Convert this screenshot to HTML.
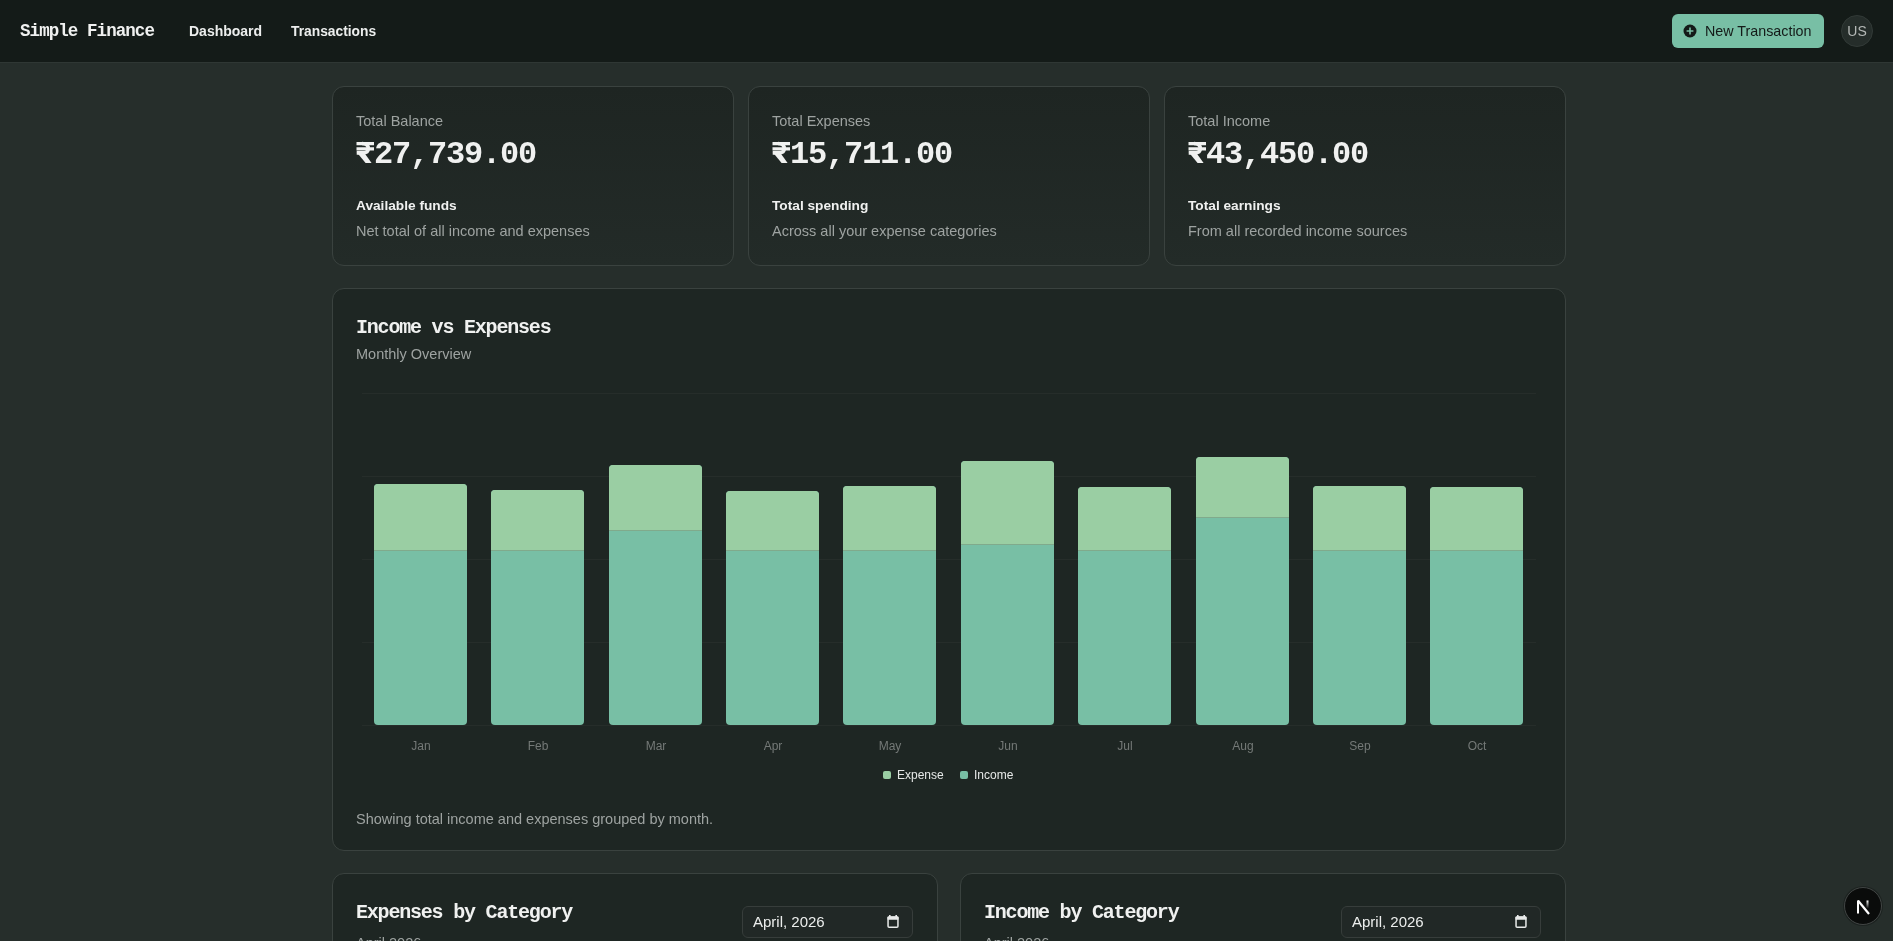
<!DOCTYPE html>
<html>
<head>
<meta charset="utf-8">
<style>
*{box-sizing:border-box;margin:0;padding:0}
html,body{width:1893px;height:941px;overflow:hidden}
body{background:#262e2b;font-family:"Liberation Sans",sans-serif;color:#f0f1f0;position:relative}
.abs{position:absolute;white-space:nowrap;will-change:transform}
.mono{font-family:"Liberation Mono",monospace;font-weight:bold}
#nav{position:absolute;left:0;top:0;width:1893px;height:63px;background:#141b18;border-bottom:1px solid #2f3734}
.card{position:absolute;background:#1e2623;border:1px solid #3a423f;border-radius:12px}
.grad{background:linear-gradient(to top,#232b28,#1e2522)}
.t14{font-size:14.5px;line-height:20px}
.muted{color:#9ea3a1}
.bold{font-weight:bold}
</style>
</head>
<body>
<div id="nav">
<div class="abs mono" style="left:20px;top:19px;font-size:17.5px;line-height:24px;letter-spacing:-0.93px">Simple Finance</div>
<div class="abs bold" style="left:189px;top:21px;font-size:14px;line-height:20px;color:#eceeed">Dashboard</div>
<div class="abs bold" style="left:291px;top:22px;font-size:13.8px;line-height:20px;color:#eceeed">Transactions</div>
<div class="abs" style="left:1672px;top:14px;width:152px;height:34px;background:#78bfa5;border-radius:6px"></div>
<svg class="abs" style="left:1683px;top:24px" width="14" height="14" viewBox="0 0 14 14"><circle cx="7" cy="7" r="6.5" fill="#141a18"/><path d="M7 3.6V10.4M3.6 7H10.4" stroke="#78bfa5" stroke-width="1.6"/></svg>
<div class="abs" style="left:1705px;top:21px;font-size:14.3px;line-height:20px;color:#141a18">New Transaction</div>
<div class="abs" style="left:1841px;top:15px;width:32px;height:32px;border-radius:50%;background:#252d2a;border:1px solid #323a37"></div>
<div class="abs" style="left:1841px;top:21px;width:32px;text-align:center;font-size:14px;line-height:20px;color:#b4b8b6">US</div>
</div>
<div class="card grad" style="left:332px;top:86px;width:402px;height:180px"></div>
<div class="abs t14 muted" style="left:356px;top:111px">Total Balance</div>
<div class="abs" style="left:356px;top:141px;width:200px;height:24px"><div style="position:absolute;left:0;top:0;width:18px;height:22px"><svg width="18" height="22" viewBox="0 0 18 22" style="position:absolute;left:0;top:0"><path d="M0.5 2.55H18M0.5 7.95H18" stroke="#f0f1f0" stroke-width="3.2" fill="none"/><path d="M6 2.55C10.2 2.55 12.3 4.8 12.3 7.8C12.3 10.6 10.2 11.9 6.5 11.9H0.7" stroke="#f0f1f0" stroke-width="3.6" fill="none"/><path d="M0.7 11.2L7.9 11.2L15.6 21.9L9.6 21.9Z" fill="#f0f1f0"/></svg></div><div class="abs mono" style="left:18px;top:-2.5px;font-size:32px;line-height:32px;letter-spacing:-1.2px">27,739.00</div></div>
<div class="abs t14 bold" style="left:356px;top:196px;font-size:13.7px">Available funds</div>
<div class="abs t14 muted" style="left:356px;top:221px">Net total of all income and expenses</div>
<div class="card grad" style="left:748px;top:86px;width:402px;height:180px"></div>
<div class="abs t14 muted" style="left:772px;top:111px">Total Expenses</div>
<div class="abs" style="left:772px;top:141px;width:200px;height:24px"><div style="position:absolute;left:0;top:0;width:18px;height:22px"><svg width="18" height="22" viewBox="0 0 18 22" style="position:absolute;left:0;top:0"><path d="M0.5 2.55H18M0.5 7.95H18" stroke="#f0f1f0" stroke-width="3.2" fill="none"/><path d="M6 2.55C10.2 2.55 12.3 4.8 12.3 7.8C12.3 10.6 10.2 11.9 6.5 11.9H0.7" stroke="#f0f1f0" stroke-width="3.6" fill="none"/><path d="M0.7 11.2L7.9 11.2L15.6 21.9L9.6 21.9Z" fill="#f0f1f0"/></svg></div><div class="abs mono" style="left:18px;top:-2.5px;font-size:32px;line-height:32px;letter-spacing:-1.2px">15,711.00</div></div>
<div class="abs t14 bold" style="left:772px;top:196px;font-size:13.7px">Total spending</div>
<div class="abs t14 muted" style="left:772px;top:221px">Across all your expense categories</div>
<div class="card grad" style="left:1164px;top:86px;width:402px;height:180px"></div>
<div class="abs t14 muted" style="left:1188px;top:111px">Total Income</div>
<div class="abs" style="left:1188px;top:141px;width:200px;height:24px"><div style="position:absolute;left:0;top:0;width:18px;height:22px"><svg width="18" height="22" viewBox="0 0 18 22" style="position:absolute;left:0;top:0"><path d="M0.5 2.55H18M0.5 7.95H18" stroke="#f0f1f0" stroke-width="3.2" fill="none"/><path d="M6 2.55C10.2 2.55 12.3 4.8 12.3 7.8C12.3 10.6 10.2 11.9 6.5 11.9H0.7" stroke="#f0f1f0" stroke-width="3.6" fill="none"/><path d="M0.7 11.2L7.9 11.2L15.6 21.9L9.6 21.9Z" fill="#f0f1f0"/></svg></div><div class="abs mono" style="left:18px;top:-2.5px;font-size:32px;line-height:32px;letter-spacing:-1.2px">43,450.00</div></div>
<div class="abs t14 bold" style="left:1188px;top:196px;font-size:13.7px">Total earnings</div>
<div class="abs t14 muted" style="left:1188px;top:221px">From all recorded income sources</div>
<div class="card" style="left:332px;top:288px;width:1234px;height:563px"></div>
<div class="abs mono" style="left:356px;top:316px;font-size:20px;line-height:24px;letter-spacing:-1.2px">Income vs Expenses</div>
<div class="abs t14 muted" style="left:356px;top:344px">Monthly Overview</div>
<div class="abs" style="left:362px;top:393px;width:1174px;height:1px;background:#262d2a"></div>
<div class="abs" style="left:362px;top:476px;width:1174px;height:1px;background:#262d2a"></div>
<div class="abs" style="left:362px;top:559px;width:1174px;height:1px;background:#262d2a"></div>
<div class="abs" style="left:362px;top:642px;width:1174px;height:1px;background:#262d2a"></div>
<div class="abs" style="left:362px;top:725px;width:1174px;height:1px;background:#262d2a"></div>
<div class="abs" style="left:374.00px;top:484px;width:93px;height:241.00px;border-radius:4px;overflow:hidden;background:#78bfa5"><div style="height:66.30px;background:#9acea3"></div><div style="position:absolute;left:0;top:66.00px;width:93px;height:1px;background:#80aa8c"></div></div>
<div class="abs" style="left:380.70px;top:738px;width:80px;text-align:center;font-size:12px;line-height:16px;color:#747977">Jan</div>
<div class="abs" style="left:491.00px;top:489.6px;width:93px;height:235.40px;border-radius:4px;overflow:hidden;background:#78bfa5"><div style="height:60.70px;background:#9acea3"></div><div style="position:absolute;left:0;top:60.40px;width:93px;height:1px;background:#80aa8c"></div></div>
<div class="abs" style="left:498.10px;top:738px;width:80px;text-align:center;font-size:12px;line-height:16px;color:#747977">Feb</div>
<div class="abs" style="left:609.00px;top:465px;width:93px;height:260.00px;border-radius:4px;overflow:hidden;background:#78bfa5"><div style="height:65.00px;background:#9acea3"></div><div style="position:absolute;left:0;top:65.00px;width:93px;height:1px;background:#80aa8c"></div></div>
<div class="abs" style="left:615.50px;top:738px;width:80px;text-align:center;font-size:12px;line-height:16px;color:#747977">Mar</div>
<div class="abs" style="left:726.00px;top:491.2px;width:93px;height:233.80px;border-radius:4px;overflow:hidden;background:#78bfa5"><div style="height:59.00px;background:#9acea3"></div><div style="position:absolute;left:0;top:58.80px;width:93px;height:1px;background:#80aa8c"></div></div>
<div class="abs" style="left:732.90px;top:738px;width:80px;text-align:center;font-size:12px;line-height:16px;color:#747977">Apr</div>
<div class="abs" style="left:843.00px;top:486.2px;width:93px;height:238.80px;border-radius:4px;overflow:hidden;background:#78bfa5"><div style="height:64.10px;background:#9acea3"></div><div style="position:absolute;left:0;top:63.80px;width:93px;height:1px;background:#80aa8c"></div></div>
<div class="abs" style="left:850.30px;top:738px;width:80px;text-align:center;font-size:12px;line-height:16px;color:#747977">May</div>
<div class="abs" style="left:961.00px;top:461.3px;width:93px;height:263.70px;border-radius:4px;overflow:hidden;background:#78bfa5"><div style="height:83.00px;background:#9acea3"></div><div style="position:absolute;left:0;top:82.70px;width:93px;height:1px;background:#80aa8c"></div></div>
<div class="abs" style="left:967.70px;top:738px;width:80px;text-align:center;font-size:12px;line-height:16px;color:#747977">Jun</div>
<div class="abs" style="left:1078.00px;top:486.9px;width:93px;height:238.10px;border-radius:4px;overflow:hidden;background:#78bfa5"><div style="height:63.40px;background:#9acea3"></div><div style="position:absolute;left:0;top:63.10px;width:93px;height:1px;background:#80aa8c"></div></div>
<div class="abs" style="left:1085.10px;top:738px;width:80px;text-align:center;font-size:12px;line-height:16px;color:#747977">Jul</div>
<div class="abs" style="left:1196.00px;top:457px;width:93px;height:268.00px;border-radius:4px;overflow:hidden;background:#78bfa5"><div style="height:60.40px;background:#9acea3"></div><div style="position:absolute;left:0;top:60.00px;width:93px;height:1px;background:#80aa8c"></div></div>
<div class="abs" style="left:1202.50px;top:738px;width:80px;text-align:center;font-size:12px;line-height:16px;color:#747977">Aug</div>
<div class="abs" style="left:1313.00px;top:486px;width:93px;height:239.00px;border-radius:4px;overflow:hidden;background:#78bfa5"><div style="height:64.30px;background:#9acea3"></div><div style="position:absolute;left:0;top:64.00px;width:93px;height:1px;background:#80aa8c"></div></div>
<div class="abs" style="left:1319.90px;top:738px;width:80px;text-align:center;font-size:12px;line-height:16px;color:#747977">Sep</div>
<div class="abs" style="left:1430.00px;top:487px;width:93px;height:238.00px;border-radius:4px;overflow:hidden;background:#78bfa5"><div style="height:63.30px;background:#9acea3"></div><div style="position:absolute;left:0;top:63.00px;width:93px;height:1px;background:#80aa8c"></div></div>
<div class="abs" style="left:1437.30px;top:738px;width:80px;text-align:center;font-size:12px;line-height:16px;color:#747977">Oct</div>
<div class="abs" style="left:883px;top:771px;width:8px;height:8px;border-radius:2px;background:#9acea3"></div>
<div class="abs" style="left:897px;top:767px;font-size:12px;line-height:16px;color:#e6e8e7">Expense</div>
<div class="abs" style="left:960px;top:771px;width:8px;height:8px;border-radius:2px;background:#78bfa5"></div>
<div class="abs" style="left:974px;top:767px;font-size:12px;line-height:16px;color:#e6e8e7">Income</div>
<div class="abs t14 muted" style="left:356px;top:809px">Showing total income and expenses grouped by month.</div>
<div class="card" style="left:332px;top:873px;width:606px;height:100px"></div>
<div class="abs mono" style="left:356px;top:901px;font-size:20px;line-height:24px;letter-spacing:-1.2px">Expenses by Category</div>
<div class="abs t14 muted" style="left:356px;top:933px">April 2026</div>
<div class="abs" style="left:742px;top:906px;width:171px;height:32px;border:1px solid #373d3b;border-radius:6px;background:#212826"></div>
<div class="abs" style="left:753px;top:912px;font-size:15px;line-height:20px;color:#eceeed">April, 2026</div>
<div class="abs" style="left:887px;top:915px;line-height:0"><svg width="12" height="13" viewBox="0 0 12 13"><rect x="2" y="0" width="1.6" height="2.5" fill="#e8eae9"/><rect x="8.4" y="0" width="1.6" height="2.5" fill="#e8eae9"/><rect x="1.05" y="2" width="9.9" height="10.2" rx="1" fill="none" stroke="#e8eae9" stroke-width="1.5"/><rect x="0.5" y="1.5" width="11" height="3.2" rx="0.8" fill="#e8eae9"/></svg></div>
<div class="card" style="left:960px;top:873px;width:606px;height:100px"></div>
<div class="abs mono" style="left:984px;top:901px;font-size:20px;line-height:24px;letter-spacing:-1.2px">Income by Category</div>
<div class="abs t14 muted" style="left:984px;top:933px">April 2026</div>
<div class="abs" style="left:1341px;top:906px;width:200px;height:32px;border:1px solid #373d3b;border-radius:6px;background:#212826"></div>
<div class="abs" style="left:1352px;top:912px;font-size:15px;line-height:20px;color:#eceeed">April, 2026</div>
<div class="abs" style="left:1515px;top:915px;line-height:0"><svg width="12" height="13" viewBox="0 0 12 13"><rect x="2" y="0" width="1.6" height="2.5" fill="#e8eae9"/><rect x="8.4" y="0" width="1.6" height="2.5" fill="#e8eae9"/><rect x="1.05" y="2" width="9.9" height="10.2" rx="1" fill="none" stroke="#e8eae9" stroke-width="1.5"/><rect x="0.5" y="1.5" width="11" height="3.2" rx="0.8" fill="#e8eae9"/></svg></div>
<div class="abs" style="left:1844px;top:887px;width:38px;height:38px;border-radius:50%;background:#0a0c0b;border:1.5px solid #414544;box-shadow:0 0 0 1px rgba(0,0,0,0.25)"></div>
<svg class="abs" style="left:1856px;top:900px" width="14" height="15" viewBox="0 0 14 15"><defs><linearGradient id="nf" x1="0" y1="0" x2="0" y2="1"><stop offset="0" stop-color="#fff"/><stop offset="1" stop-color="#fff" stop-opacity="0"/></linearGradient></defs><rect x="1" y="0.5" width="2" height="13" fill="#fff"/><path d="M2 0.5L13 14" stroke="#fff" stroke-width="2.2"/><rect x="10.5" y="0.5" width="2" height="8" fill="url(#nf)"/></svg>
</body>
</html>
